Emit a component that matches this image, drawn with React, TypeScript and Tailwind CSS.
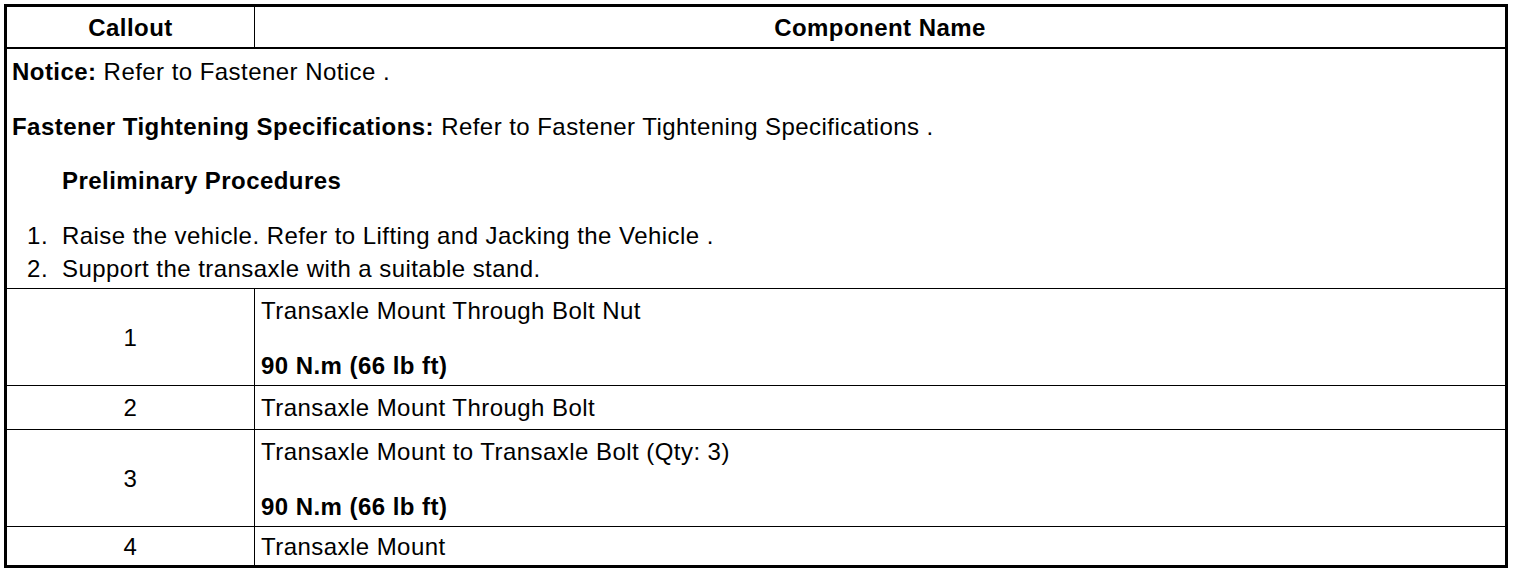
const rows = [
  { callout: '1', name: 'Transaxle Mount Through Bolt Nut', torque: '90 N.m (66 lb ft)', h: 'h-[97px]' },
  { callout: '2', name: 'Transaxle Mount Through Bolt', h: 'h-[44px]' },
  { callout: '3', name: 'Transaxle Mount to Transaxle Bolt (Qty: 3)', torque: '90 N.m (66 lb ft)', h: 'h-[97px]' },
  { callout: '4', name: 'Transaxle Mount', h: 'h-[38px]' },
];

export default function App() {
  return (
    <div className="bg-white w-[1520px] h-[576px] pt-[4px] pl-[4px] text-black text-[24px] leading-[33px] tracking-[0.45px] font-['Liberation_Sans',Arial,sans-serif]">
      <div className="w-[1504px] border-[3px] border-black">
        {/* header */}
        <div className="flex h-[42px] border-b-2 border-black font-bold">
          <div className="w-[248px] border-r border-black flex items-center justify-center">Callout</div>
          <div className="flex-1 flex items-center justify-center">Component Name</div>
        </div>

        {/* notes */}
        <div className="h-[240px] pl-[5px] pt-[6px] border-b border-black">
          <p>
            <span className="font-bold">Notice:</span> Refer to Fastener Notice .
          </p>
          <p className="mt-[22px]">
            <span className="font-bold">Fastener Tightening Specifications:</span> Refer to Fastener Tightening Specifications .
          </p>
          <p className="mt-[21px] pl-[50px] font-bold">Preliminary Procedures</p>
          <ol className="mt-[22px]">
            <li className="flex">
              <span className="w-[50px] text-right pr-[14px]">1.</span>
              <span>Raise the vehicle. Refer to Lifting and Jacking the Vehicle .</span>
            </li>
            <li className="flex">
              <span className="w-[50px] text-right pr-[14px]">2.</span>
              <span>Support the transaxle with a suitable stand.</span>
            </li>
          </ol>
        </div>

        {/* callouts */}
        {rows.map((r, i) => (
          <div key={r.callout} className={`flex ${r.h} ${i < rows.length - 1 ? 'border-b border-black' : ''}`}>
            <div className="w-[248px] border-r border-black flex items-center justify-center">{r.callout}</div>
            {r.torque ? (
              <div className="flex-1 pl-[6px] pt-[5px]">
                <p>{r.name}</p>
                <p className="mt-[22px] font-bold">{r.torque}</p>
              </div>
            ) : (
              <div className="flex-1 pl-[6px] flex items-center">{r.name}</div>
            )}
          </div>
        ))}
      </div>
    </div>
  );
}
